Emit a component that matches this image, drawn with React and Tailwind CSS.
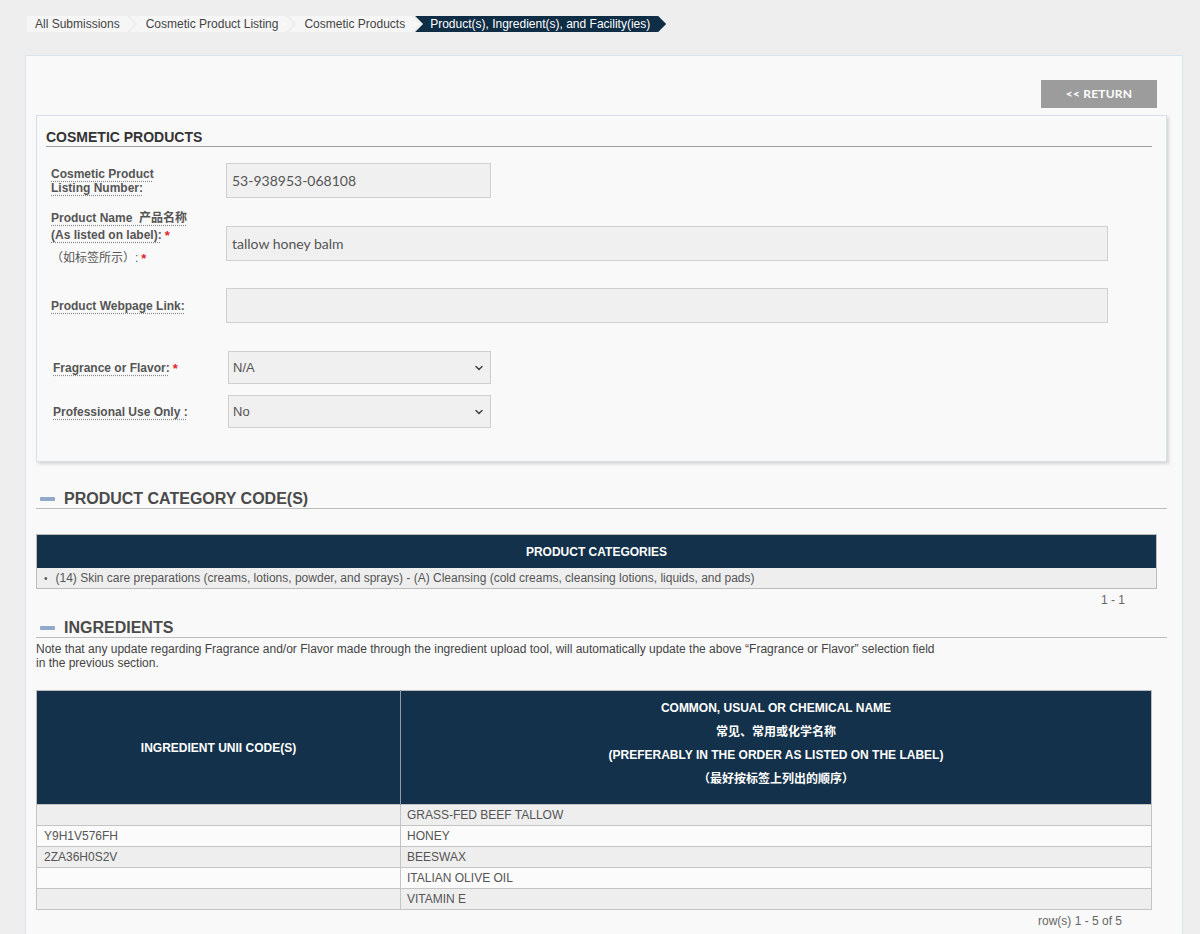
import { ChevronDown } from 'lucide-react';

const crumbs = ['All Submissions', 'Cosmetic Product Listing', 'Cosmetic Products'];

const ingredients = [
  { code: '', name: 'GRASS-FED BEEF TALLOW' },
  { code: 'Y9H1V576FH', name: 'HONEY' },
  { code: '2ZA36H0S2V', name: 'BEESWAX' },
  { code: '', name: 'ITALIAN OLIVE OIL' },
  { code: '', name: 'VITAMIN E' },
];

const Req = () => <sup className="text-[#e3262b] text-[13px] font-bold ml-[3px] relative top-[1px]">*</sup>;

const Label = ({ children }) => (
  <span className="underline decoration-dotted decoration-[#8a8a8a] underline-offset-[3px]">{children}</span>
);

const SectionHeading = ({ title }) => (
  <div className="flex items-center border-b border-[#bdbdbd]">
    <span className="w-[15px] h-[4px] bg-[#93a9c9] rounded-[1px] ml-[4px] mr-[9px]" />
    <h2 className="text-[16px] leading-[18px] font-bold text-[#4a4a4a]">{title}</h2>
  </div>
);

const Select = ({ value }) => (
  <div className="w-[263px] h-[33px] bg-[#f0f0f0] border border-[#cfcfcf] flex items-center justify-between pl-[4px] pr-[5px] text-[13px] font-normal text-[#555]">
    <span>{value}</span>
    <ChevronDown size={12} strokeWidth={3} className="text-[#444]" />
  </div>
);

export default function App() {
  return (
    <div className="min-h-[934px] bg-[#eeeeee] pt-4 font-['Liberation_Sans','Noto_Sans_CJK_SC',sans-serif] text-[12px] text-[#555]">
      {/* Breadcrumb */}
      <nav className="flex ml-[27px] h-4">
        {crumbs.map((c, i) => (
          <span
            key={c}
            className={`h-4 flex items-center bg-[#f6f6f6] text-[#444] leading-4 pr-[15px] ${i === 0 ? 'pl-[8px] [clip-path:polygon(0_0,calc(100%-8px)_0,100%_50%,calc(100%-8px)_100%,0_100%)]' : 'pl-[16px] -ml-[5px] [clip-path:polygon(0_0,calc(100%-8px)_0,100%_50%,calc(100%-8px)_100%,0_100%,8px_50%)]'}`}
          >
            {c}
          </span>
        ))}
        <span className="h-4 flex items-center bg-[#0f2d45] text-white leading-4 pl-[15px] pr-[16px] -ml-[5px] [clip-path:polygon(0_0,calc(100%-8px)_0,100%_50%,calc(100%-8px)_100%,0_100%,8px_50%)]">
          Product(s), Ingredient(s), and Facility(ies)
        </span>
      </nav>

      {/* Main panel */}
      <div className="ml-[25px] w-[1158px] mt-[23px] border border-[#d8e4ee] bg-[#f9f9f9] pl-[10px] pr-[15px] pt-[24px] pb-[14px]">
        <div className="flex justify-end pr-[10px]">
          <button className="w-[116px] h-[28px] bg-[#9c9c9c] text-white font-['Lato',sans-serif] font-bold text-[12px] tracking-[0.2px]">
            &lt;&lt; RETURN
          </button>
        </div>

        {/* Cosmetic products box */}
        <div className="mt-[7px] border border-[#d5e0ea] bg-[#f9f9f9] shadow-[2px_2px_3px_rgba(0,0,0,0.14)] pl-[9px] pr-[14px] pt-[13px] pb-[33px]">
          <h3 className="text-[14px] leading-[16px] font-bold text-[#333] border-b border-[#9f9f9f] pb-[1px]">COSMETIC PRODUCTS</h3>

          <div className="pl-[5px] font-bold">
            <div className="flex items-center mt-[16px]">
              <div className="w-[175px] leading-[14px]">
                <Label>Cosmetic Product</Label>
                <br />
                <Label>Listing Number:</Label>
              </div>
              <div className="w-[265px] h-[35px] bg-[#f0f0f0] border border-[#d0d0d0] flex items-center pl-[5px] font-['Lato',sans-serif] font-normal text-[14px] text-[#555]">
                53-938953-068108
              </div>
            </div>

            <div className="flex items-start mt-[12px]">
              <div className="w-[175px] leading-[17px]">
                <Label>Product Name&nbsp; 产品名称</Label>
                <br />
                <Label>(As listed on label):</Label>
                <Req />
                <div className="mt-[6px] font-normal text-[#555]">
                  （如标签所示）:
                  <Req />
                </div>
              </div>
              <div className="mt-[16px] w-[882px] h-[35px] bg-[#f0f0f0] border border-[#d0d0d0] flex items-center pl-[5px] font-['Lato',sans-serif] font-normal text-[14px] text-[#555]">
                tallow honey balm
              </div>
            </div>

            <div className="flex items-center mt-[21px]">
              <div className="w-[175px]">
                <Label>Product Webpage Link:</Label>
              </div>
              <div className="w-[882px] h-[35px] bg-[#f0f0f0] border border-[#d0d0d0]" />
            </div>

            <div className="flex items-center mt-[28px] pl-[2px]">
              <div className="w-[175px]">
                <Label>Fragrance or Flavor:</Label>
                <Req />
              </div>
              <Select value="N/A" />
            </div>

            <div className="flex items-center mt-[11px] pl-[2px]">
              <div className="w-[175px]">
                <Label>Professional Use Only :</Label>
              </div>
              <Select value="No" />
            </div>
          </div>
        </div>

        {/* Product category */}
        <div className="mt-[28px]">
          <SectionHeading title="PRODUCT CATEGORY CODE(S)" />
          <div className="mt-[25px] w-[1121px] border border-[#bcbcbc]">
            <div className="h-[33px] bg-[#13314a] flex items-center justify-center text-white font-bold">
              PRODUCT CATEGORIES
            </div>
            <div className="h-[20px] bg-[#eeeeee] flex items-center pl-[7px]">
              <span className="mr-[8px] text-[10px]">•</span>
              (14) Skin care preparations (creams, lotions, powder, and sprays) - (A) Cleansing (cold creams, cleansing lotions, liquids, and pads)
            </div>
          </div>
          <div className="w-[1089px] text-right text-[#666] mt-[2px]">1 - 1</div>
        </div>

        {/* Ingredients */}
        <div className="mt-[10px]">
          <SectionHeading title="INGREDIENTS" />
          <p className="mt-[4px] leading-[14px] text-[#444]">
            Note that any update regarding Fragrance and/or Flavor made through the ingredient upload tool, will automatically update the above “Fragrance or Flavor” selection field
            <br />
            in the previous section.
          </p>

          <table className="mt-[20px] w-[1116px] border-collapse border border-[#bcbcbc]">
            <thead>
              <tr className="bg-[#13314a] text-white font-bold">
                <th className="w-[364px] border-r border-[#8d9cab] font-bold">INGREDIENT UNII CODE(S)</th>
                <th className="pt-[6px] pb-[13px] leading-[23.5px] font-bold">
                  COMMON, USUAL OR CHEMICAL NAME
                  <br />
                  常见、常用或化学名称
                  <br />
                  (PREFERABLY IN THE ORDER AS LISTED ON THE LABEL)
                  <br />
                  （最好按标签上列出的顺序）
                </th>
              </tr>
            </thead>
            <tbody>
              {ingredients.map((r, i) => (
                <tr key={r.name} className={i % 2 === 0 ? 'bg-[#eeeeee]' : 'bg-[#fbfbfb]'}>
                  <td className="h-[21px] border border-[#c4c4c4] pl-[7px] py-0 leading-[20px]">{r.code}</td>
                  <td className="h-[21px] border border-[#c4c4c4] pl-[6px] py-0 leading-[20px]">{r.name}</td>
                </tr>
              ))}
            </tbody>
          </table>
          <div className="w-[1086px] text-right text-[#666] mt-[2px]">row(s) 1 - 5 of 5</div>
        </div>
      </div>
    </div>
  );
}
